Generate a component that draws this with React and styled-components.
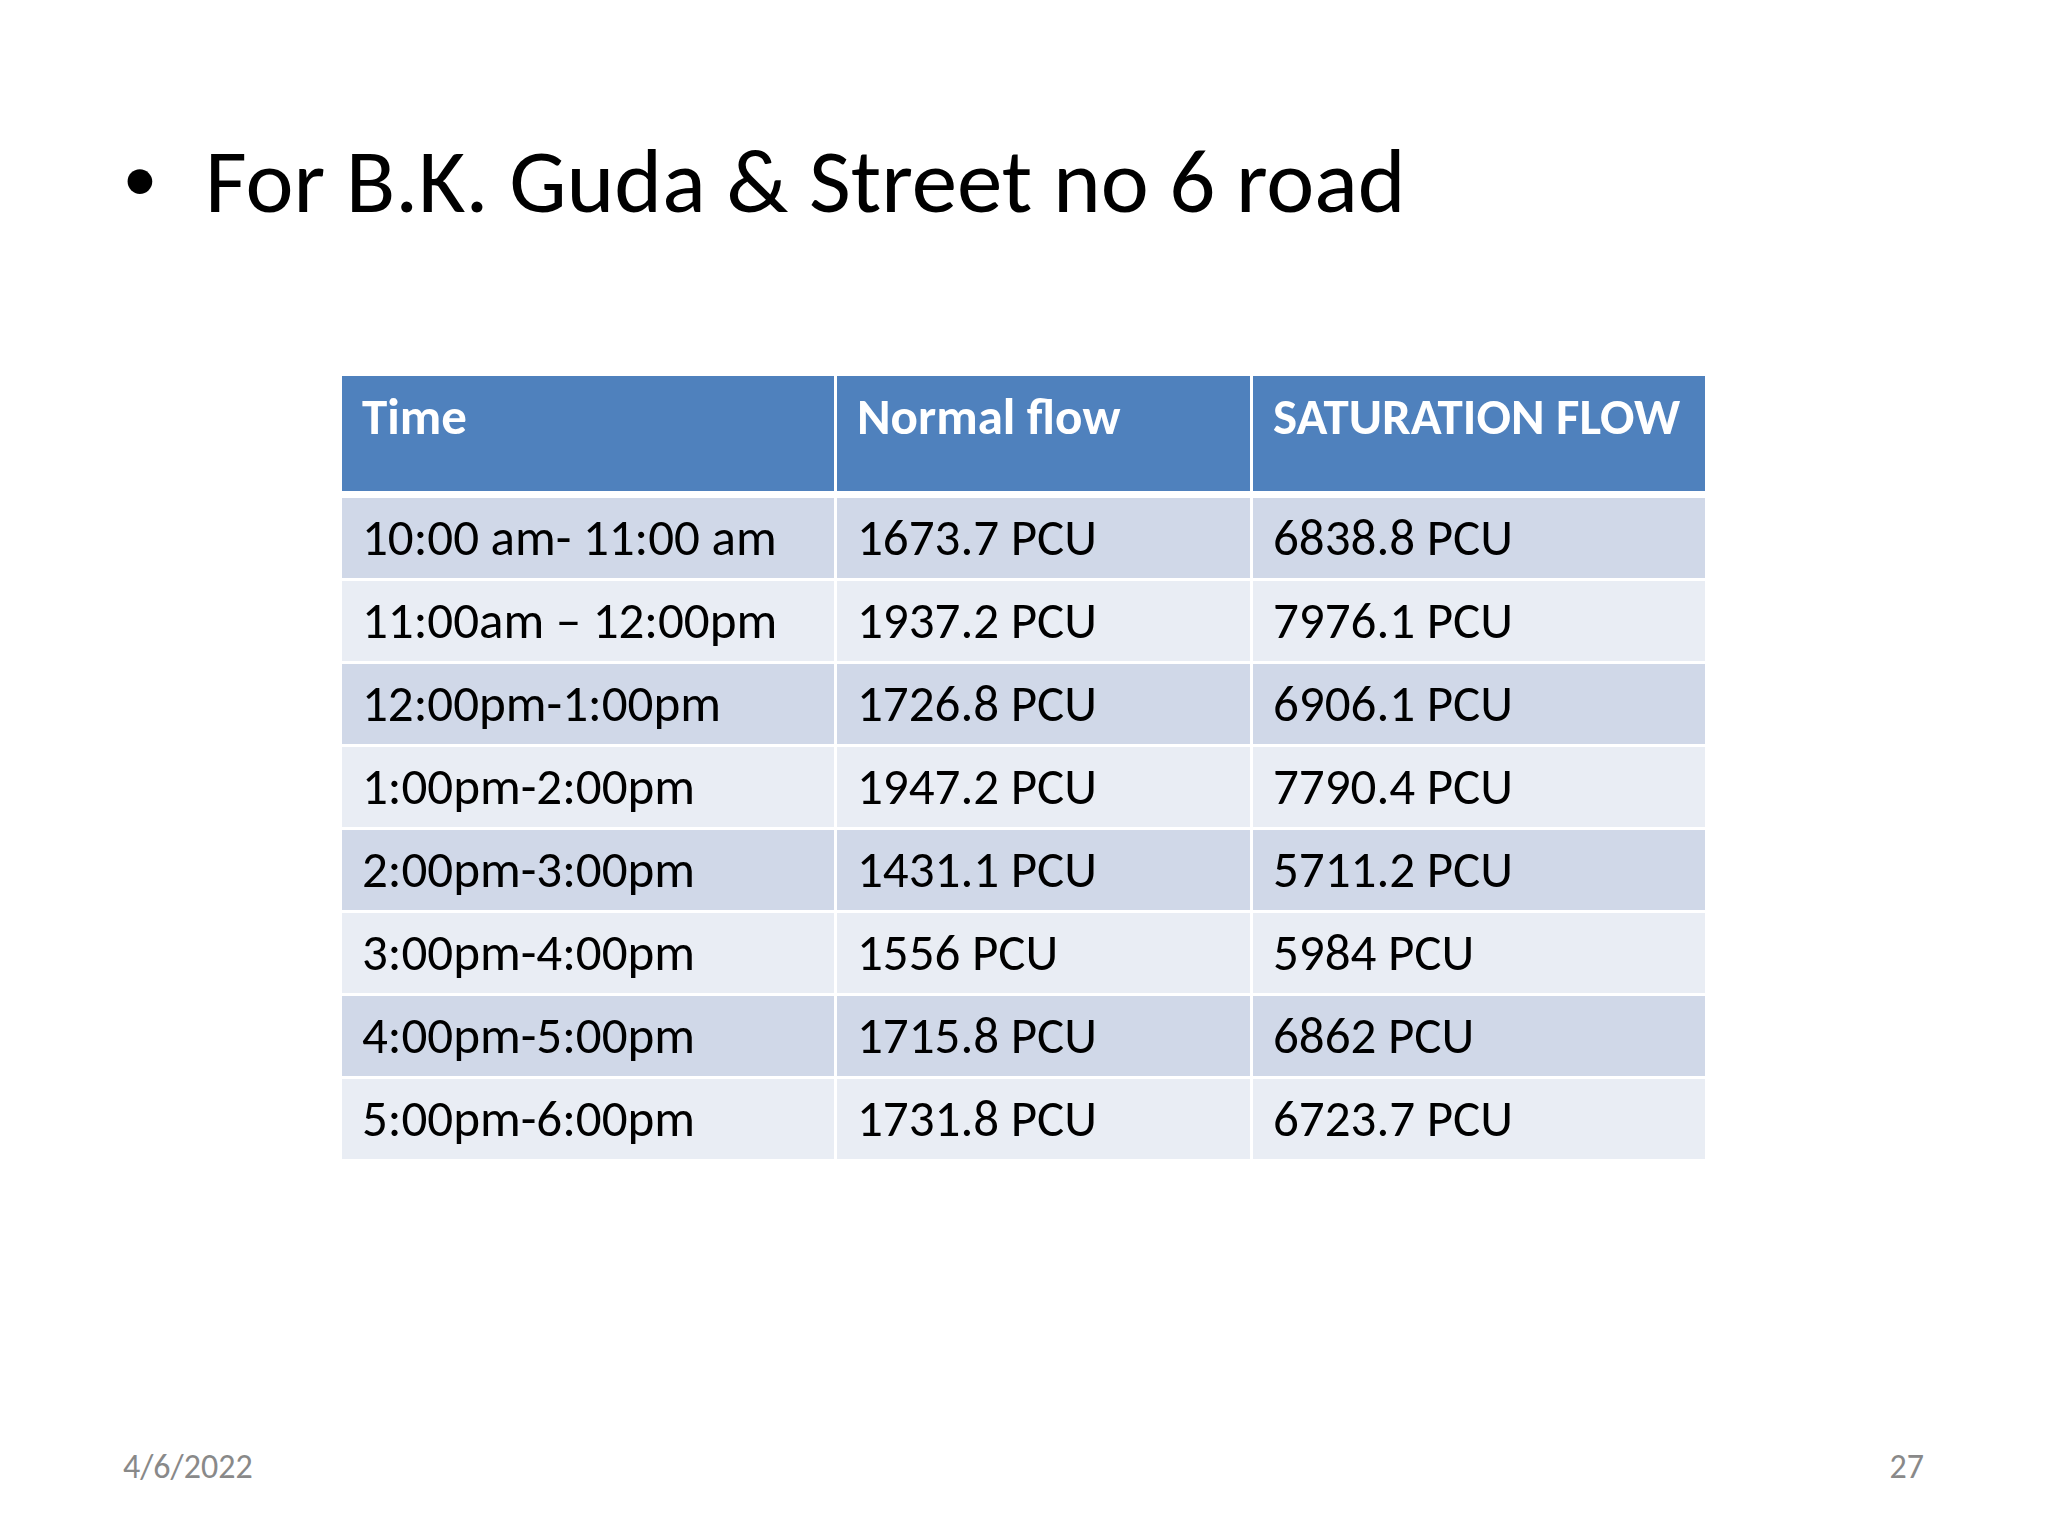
import React from "react";
import styled, { createGlobalStyle } from "styled-components";

const GlobalStyle = createGlobalStyle`
  html, body {
    margin: 0;
    padding: 0;
    background: #ffffff;
  }
  body {
    font-family: Carlito, Lato, "Open Sans", sans-serif;
  }
`;

const Slide = styled.div`
  width: 2048px;
  height: 1536px;
  position: relative;
  background: #ffffff;
  display: flex;
  flex-direction: column;
  overflow: hidden;
`;

const TitleRow = styled.div`
  display: flex;
  align-items: baseline;
  margin-top: 135px;
  padding-left: 124px;
  font-size: 91px;
  line-height: 1;
  color: #000000;
`;

const Bullet = styled.span`
  width: 81px;
  flex: none;
  font-family: "Liberation Sans", Arial, sans-serif;
`;

const Title = styled.h1`
  margin: 0;
  font-size: inherit;
  font-weight: 400;
  white-space: nowrap;
`;

const Table = styled.div`
  margin: 150px 0 0 342px;
  width: 1363px;
  display: grid;
  grid-template-columns: 492px 413px 452px;
  column-gap: 3px;
  row-gap: 3px;
`;

const HeadCell = styled.div`
  height: 115px;
  margin-bottom: 4px;
  box-sizing: border-box;
  padding: 10px 20px 0;
  background: #4f81bd;
  color: #ffffff;
  font-size: 51px;
  font-weight: 700;
  line-height: 1.2;
  white-space: nowrap;
`;

const Cell = styled.div`
  height: 80px;
  box-sizing: border-box;
  padding: 0 20px;
  display: flex;
  align-items: center;
  background: ${(p) => (p.$odd ? "#d0d8e8" : "#e9edf4")};
  color: #000000;
  font-size: 51px;
  line-height: 1.2;
  white-space: nowrap;
`;

const Footer = styled.div`
  margin-top: auto;
  display: flex;
  justify-content: space-between;
  padding: 0 124px 48px 123px;
  font-size: 34px;
  line-height: 1.2;
  color: #898989;
`;

const rows = [
  ["10:00 am- 11:00 am", "1673.7 PCU", "6838.8 PCU"],
  ["11:00am \u2013 12:00pm", "1937.2 PCU", "7976.1 PCU"],
  ["12:00pm-1:00pm", "1726.8 PCU", "6906.1 PCU"],
  ["1:00pm-2:00pm", "1947.2 PCU", "7790.4 PCU"],
  ["2:00pm-3:00pm", "1431.1 PCU", "5711.2 PCU"],
  ["3:00pm-4:00pm", "1556 PCU", "5984 PCU"],
  ["4:00pm-5:00pm", "1715.8 PCU", "6862 PCU"],
  ["5:00pm-6:00pm", "1731.8 PCU", "6723.7 PCU"],
];

export default function App() {
  return (
    <>
      <GlobalStyle />
      <Slide>
        <TitleRow>
          <Bullet>•</Bullet>
          <Title>For B.K. Guda &amp; Street no 6 road</Title>
        </TitleRow>

        <Table>
          <HeadCell>Time</HeadCell>
          <HeadCell>Normal flow</HeadCell>
          <HeadCell>SATURATION FLOW</HeadCell>
          {rows.map((r, i) =>
            r.map((v, j) => (
              <Cell key={i + "-" + j} $odd={i % 2 === 0}>
                {v}
              </Cell>
            ))
          )}
        </Table>

        <Footer>
          <span>4/6/2022</span>
          <span>27</span>
        </Footer>
      </Slide>
    </>
  );
}
